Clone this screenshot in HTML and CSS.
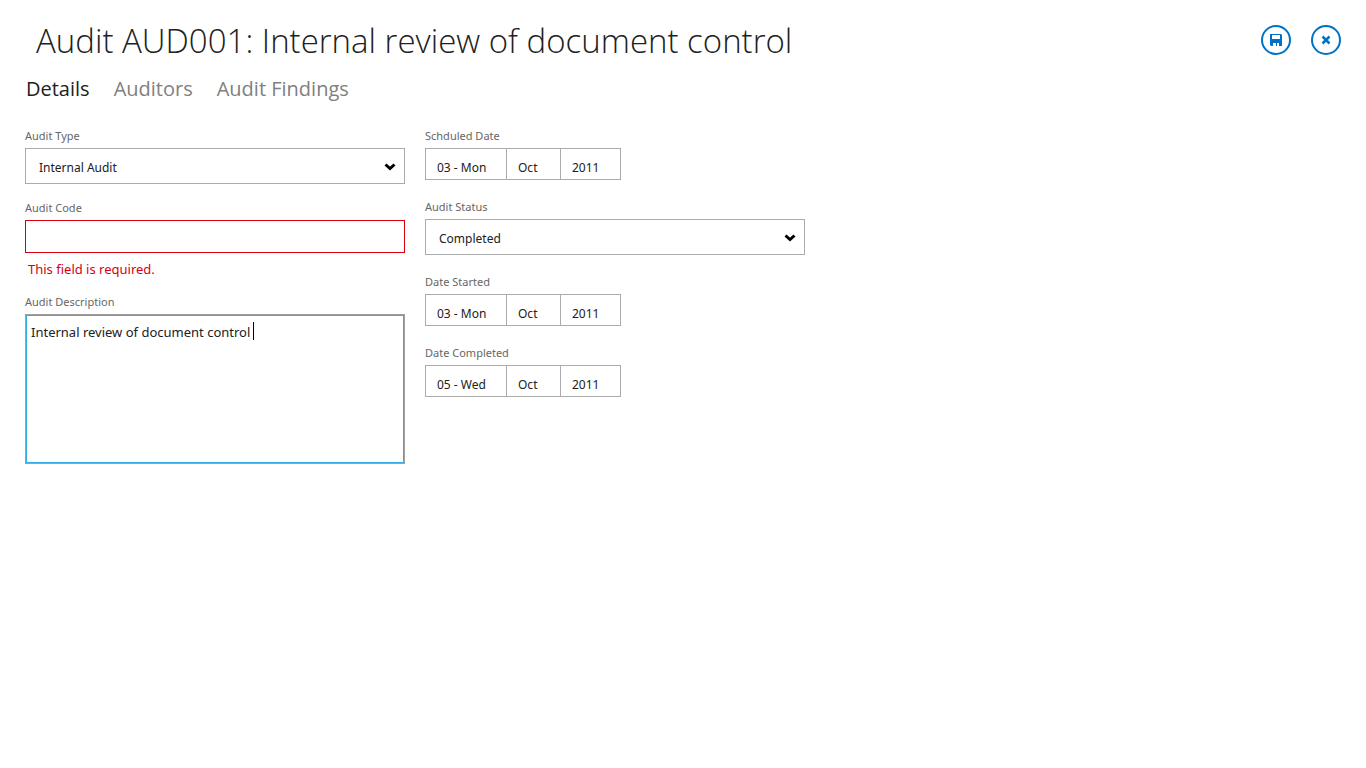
FILE: index.html
```html
<!DOCTYPE html>
<html lang="en">
<head>
<meta charset="utf-8">
<title>Audit AUD001</title>
<meta name="viewport" content="width=device-width, initial-scale=1">
<link rel="stylesheet" href="styles.css">
</head>
<body>
<header class="header">
  <h1 class="title">Audit AUD001: Internal review of document control</h1>
  <div class="actions">
    <button class="round-button" type="submit" form="audit-form" aria-label="Save">
      <svg class="icon" viewBox="0 0 12 12" aria-hidden="true"><path fill="currentColor" fill-rule="evenodd" d="M0 0H11L12 1V12H9V9H7V12H6V9H3V12H1L0 11ZM2 1V5H10V1Z"/></svg>
    </button>
    <button class="round-button" type="button" aria-label="Close">
      <svg class="icon" viewBox="0 0 12 12" aria-hidden="true"><path fill="none" stroke="currentColor" stroke-width="2.500" d="M2.500 2.500L9.500 9.500M9.500 2.500L2.500 9.500"/></svg>
    </button>
  </div>
</header>
<nav class="tabs">
  <a class="tab tab-active" href="#details" aria-current="page">Details</a>
  <a class="tab" href="#auditors">Auditors</a>
  <a class="tab" href="#findings">Audit Findings</a>
</nav>
<main>
  <form class="form" id="audit-form" novalidate>
    <div class="column">
      <div class="field">
        <label class="label" for="type">Audit Type</label>
        <div class="select-box">
          <select class="control select" id="type"><option>Internal Audit</option></select>
          <svg class="chevron" viewBox="0 0 12 8" aria-hidden="true"><path d="M1.500 1.500L6 5.500L10.500 1.500"/></svg>
        </div>
      </div>
      <div class="field">
        <label class="label" for="code">Audit Code</label>
        <input class="control input input-invalid" id="code" type="text" required aria-invalid="true" aria-describedby="code-error">
        <p class="error" id="code-error">This field is required.</p>
      </div>
      <div class="field">
        <label class="label" for="description">Audit Description</label>
        <textarea class="control textarea" id="description">Internal review of document control</textarea>
      </div>
    </div>
    <div class="column column-dates">
      <div class="field" role="group" aria-labelledby="scheduled">
        <label class="label" id="scheduled" for="scheduled-day">Schduled Date</label>
        <div class="date">
          <select class="control part day" id="scheduled-day"><option>03 - Mon</option></select>
          <select class="control part month" aria-label="Month"><option>Oct</option></select>
          <select class="control part year" aria-label="Year"><option>2011</option></select>
        </div>
      </div>
      <div class="field">
        <label class="label" for="status">Audit Status</label>
        <div class="select-box">
          <select class="control select" id="status"><option>Completed</option></select>
          <svg class="chevron" viewBox="0 0 12 8" aria-hidden="true"><path d="M1.500 1.500L6 5.500L10.500 1.500"/></svg>
        </div>
      </div>
      <div class="field" role="group" aria-labelledby="started">
        <label class="label" id="started" for="started-day">Date Started</label>
        <div class="date">
          <select class="control part day" id="started-day"><option>03 - Mon</option></select>
          <select class="control part month" aria-label="Month"><option>Oct</option></select>
          <select class="control part year" aria-label="Year"><option>2011</option></select>
        </div>
      </div>
      <div class="field" role="group" aria-labelledby="completed">
        <label class="label" id="completed" for="completed-day">Date Completed</label>
        <div class="date">
          <select class="control part day" id="completed-day"><option>05 - Wed</option></select>
          <select class="control part month" aria-label="Month"><option>Oct</option></select>
          <select class="control part year" aria-label="Year"><option>2011</option></select>
        </div>
      </div>
    </div>
  </form>
</main>
</body>
</html>
```
FILE: styles.css
```css
* { box-sizing: border-box; }

body {
  margin: 0;
  padding: 16px 25px;
  background: #fff;
  color: #212121;
  font-family: "Segoe UI", "Open Sans", "Noto Sans", sans-serif;
  font-size: 12px;
}

.header {
  display: flex;
  justify-content: space-between;
  align-items: center;
  gap: 20px;
}

.title {
  margin: 0;
  padding: 2px 0 0 11px;
  font-size: 33px;
  font-weight: 300;
  line-height: 46px;
}

.actions { display: flex; gap: 20px; }

.round-button {
  display: grid;
  place-items: center;
  width: 30px;
  height: 30px;
  padding: 0;
  border: 2px solid #0072c6;
  border-radius: 50%;
  background: #fff;
  color: #0072c6;
}

.icon { width: 12px; height: 12px; }

.tabs {
  display: flex;
  gap: 24px;
  padding: 9px 1px 0;
}

.tab {
  color: #808080;
  font-size: 20px;
  line-height: 32px;
  text-decoration: none;
}

.tab-active { color: #212121; }

.form {
  display: grid;
  grid-template-columns: repeat(2, minmax(0, 380px));
  align-items: start;
  gap: 20px;
  padding-top: 23px;
  font-family: "Segoe UI", "Noto Sans", "Open Sans", sans-serif;
}

.column { display: grid; gap: 16px; }
.column-dates { gap: 19px; }

.field {
  display: flex;
  flex-direction: column;
}

.label {
  margin-bottom: 4px;
  color: #666;
  font-size: 11px;
  line-height: 16px;
}

.control {
  margin: 0;
  border: 1px solid #ababab;
  border-radius: 0;
  outline: 0;
  background: #fff;
  color: #212121;
  font-family: inherit;
  font-size: 12px;
  appearance: none;
}

.select-box { position: relative; }

.select {
  display: block;
  width: 100%;
  height: 36px;
  padding: 2px 32px 0 13px;
}

.chevron {
  position: absolute;
  top: 15px;
  right: 9px;
  width: 12px;
  height: 8px;
  fill: none;
  stroke: #000;
  stroke-width: 3;
  pointer-events: none;
}

.input { height: 33px; padding: 4px 6px; }
.input-invalid { border-color: #d6000f; }

.error {
  margin: 8px 3px 0;
  color: #d6000f;
  font-size: 13px;
  line-height: 17px;
}

/* The one-pixel gradient is the resting text cursor. */
.textarea {
  height: 150px;
  padding: 8px 5px;
  border-color: #a0a0a0;
  background: linear-gradient(#000, #000) 227px 7px / 1px 18px no-repeat #fff;
  box-shadow: inset 0 0 0 1px #2eaee5;
  font-size: 13px;
  line-height: 18px;
  resize: none;
}

.date { display: flex; }

.part {
  height: 32px;
  padding: 6px 11px 0;
}

.part + .part { margin-left: -1px; }
.day { width: 82px; }
.month { width: 55px; }
.year { width: 61px; }
```
